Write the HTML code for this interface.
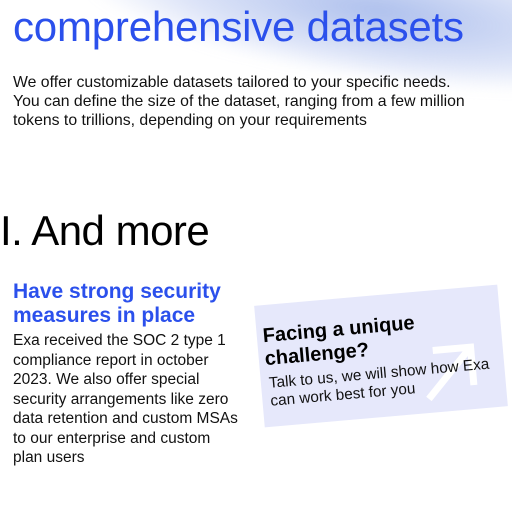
<!DOCTYPE html>
<html><head><style>
body{margin:0;width:512px;height:512px;overflow:hidden;background:#fff;font-family:"Liberation Sans",sans-serif;position:relative}
.blob{position:absolute;left:90px;top:-50px;width:480px;height:120px;background:radial-gradient(ellipse at 60% 45%,rgba(120,150,225,.6),rgba(160,180,235,.35) 50%,rgba(255,255,255,0) 75%);filter:blur(6px);transform:rotate(8deg)}
.h1{position:absolute;left:13px;top:3px;font-size:42px;color:#2b50ec;letter-spacing:-0.2px;white-space:nowrap}
.p{position:absolute;left:13px;top:73px;font-size:15.8px;line-height:19px;color:#111;white-space:nowrap}
.h2{position:absolute;left:0;top:207px;font-size:42px;color:#000;letter-spacing:-0.5px}
.h3{position:absolute;left:13px;top:280px;font-size:21px;line-height:24px;color:#2b50ec;font-weight:bold;width:230px}
.p2{position:absolute;left:13px;top:331px;font-size:15.5px;line-height:19.5px;color:#111;width:228px}
.card{position:absolute;left:259px;top:295px;width:244px;height:122px;background:#e6e8fb;transform:rotate(-5deg)}
.card b{position:absolute;left:6px;top:20px;font-size:20px;line-height:23px;color:#000;width:200px}
.card span{position:absolute;left:8px;top:70px;font-size:15.3px;line-height:18px;color:#111;width:240px}
.arr{position:absolute;left:160px;top:52px}
</style></head><body>
<div class="blob"></div>
<div class="h1">comprehensive datasets</div>
<div class="p">We offer customizable datasets tailored to your specific needs.<br>You can define the size of the dataset, ranging from a few million<br>tokens to trillions, depending on your requirements</div>
<div class="h2">I. And more</div>
<div class="h3">Have strong security measures in place</div>
<div class="p2">Exa received the SOC 2 type 1 compliance report in october 2023. We also offer special security arrangements like zero data retention and custom MSAs to our enterprise and custom plan users</div>
<div class="card">
<svg class="arr" width="60" height="62" viewBox="0 0 60 62"><path d="M6 56 L50 10 M14 8 H52 V46" stroke="#fff" stroke-width="7" fill="none"/></svg>
<b>Facing a unique challenge?</b>
<span>Talk to us, we will show how Exa can work best for you</span>
</div>
</body></html>
